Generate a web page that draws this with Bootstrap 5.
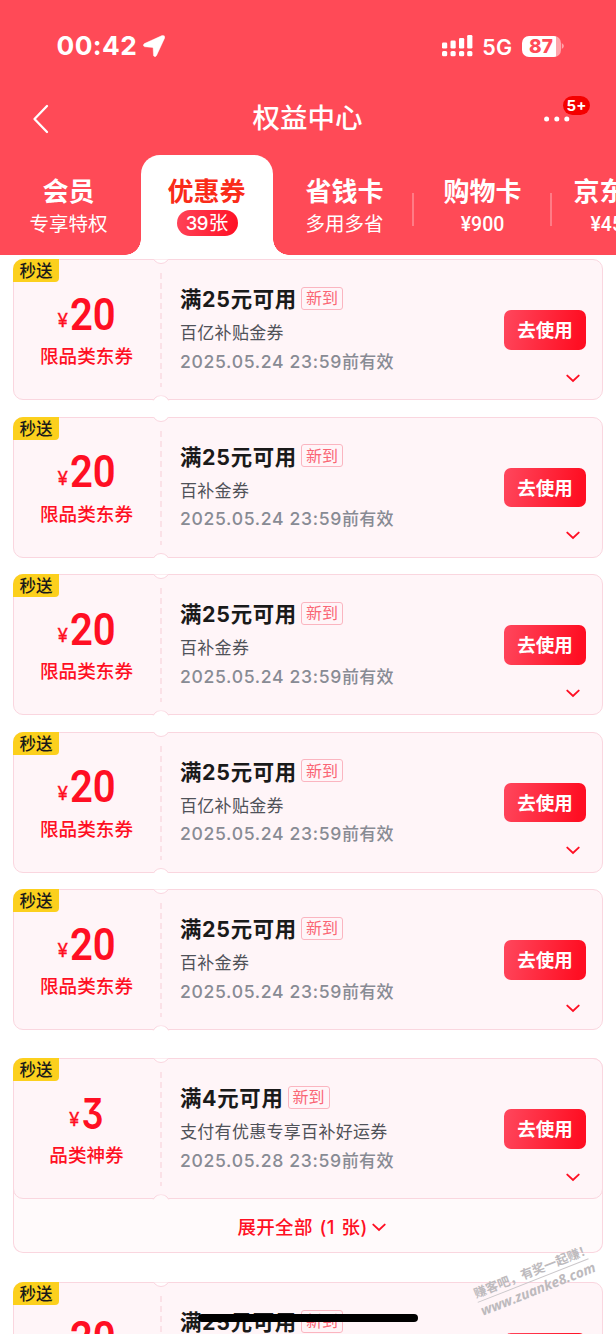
<!DOCTYPE html>
<html lang="zh-CN">
<head>
<meta charset="utf-8">
<meta name="viewport" content="width=device-width, initial-scale=1">
<title>权益中心</title>
<link href="https://cdn.jsdelivr.net/npm/bootstrap@5.3.0/dist/css/bootstrap.min.css" rel="stylesheet">
<style>
  html, body { height: 1334px; overflow: hidden; }
  body { font-family: Inter, "Noto Sans CJK SC", sans-serif; background: #fff; color: #1a1a1a; line-height: 1; }
  .hero { background: #ff4a57; height: 255px; }
  .status { height: 92px; padding: 0 52px 0 56.5px; }
  .clock { font-size: 26.3px; font-weight: 700; letter-spacing: .45px; }
  .net { font-size: 21.5px; font-weight: 600; }
  .batt { width: 39px; height: 21px; border-radius: 7px; background: linear-gradient(90deg, #fff 34px, #ffa4ab 34px); color: #ff4a57; font-size: 19px; font-weight: 800; padding-right: 1px; }
  .titlebar { height: 53px; }
  .titlebar h1 { font-size: 27.5px; font-weight: 500; padding: 0 1px 0 0; }
  .side { width: 80px; }
  .menu-dots { margin-bottom: 3px; }
  .count { top: -20px; left: 19px; width: 27px; height: 19px; border-radius: 10px; background: #f50000; font-size: 15px; font-weight: 700; }
  .tabs { height: 100px; margin-top: 10px; }
  .tab-col { width: 138px; flex: none; color: #fff; padding: 20px 1px 0 0; }
  .tab-col b { font-size: 26px; line-height: 34px; font-weight: 700; white-space: nowrap; }
  .tab-col span { font-size: 19.5px; line-height: 26px; margin-top: 2px; white-space: nowrap; }
  .tab-col .sum { font-family: Roboto, "Noto Sans CJK SC", sans-serif; font-weight: 500; font-size: 19.5px; padding-top: 1px; }
  .ruled::after { content: ""; position: absolute; right: 0; top: 38px; width: 2px; height: 33px; background: #ff7c86; }
  .tab-on { margin: 0 3px; width: 132px; background: #fff; border-radius: 19px 19px 0 0; color: #fa2c19; }
  .tab-on::before, .tab-on::after { content: ""; position: absolute; bottom: 0; width: 16px; height: 16px; }
  .tab-on::before { right: 100%; background: radial-gradient(circle at 0 0, transparent 15.5px, #fff 16px); }
  .tab-on::after { left: 100%; background: radial-gradient(circle at 100% 0, transparent 15.5px, #fff 16px); }
  .tab-on .pill { width: 61px; height: 26px; margin: 1px 0 0 1px; border-radius: 13px; background: linear-gradient(100deg, #ff4459, #ff0f23); color: #fff; font-size: 19.5px; }
  .pill i { font-style: normal; font-weight: 500; font-size: 18.5px; letter-spacing: -.7px; margin-right: 1px; }
  .coupons { padding: 4.4px 13px 0; height: 1079px; }
  .coupon { height: 141px; margin-bottom: 16.5px; border: 1px solid #fad6df; border-radius: 10px; background: #fff5f8; }
  .coupon::before, .coupon::after { content: ""; position: absolute; left: 138px; width: 18px; height: 18px; border-radius: 50%; border: 1px solid #fad6df; background: #fff; }
  .coupon::before { top: -14px; clip-path: inset(13px 0 0 0); }
  .coupon::after { bottom: -14px; clip-path: inset(0 0 13px 0); }
  .gap-after { margin-bottom: 28px; }
  .group-box { border-radius: 10px; background: #fffafb; box-shadow: inset 0 0 0 1px #fad6df; height: 195px; margin-bottom: 29px; }
  .group-box .coupon { margin: 0; }
  .group-box .coupon::after { background: #fffafb; }
  .unfold { height: 56px; color: #ff0f23; font-size: 18.5px; font-weight: 500; padding-left: 7px; }
  .unfold span { letter-spacing: .35px; word-spacing: 1.5px; }
  .flag { left: -1px; top: -1px; width: 46px; height: 23px; padding-top: 1px; border-radius: 10px 0 4px 0; background: #fcd01d; color: #1a1a1a; font-size: 16.5px; font-weight: 500; }
  .stub { width: 147px; flex: none; color: #ff0f23; padding: 35px 2px 0 0; }
  .stub .price { height: 40px; }
  .yen { font-size: 19px; font-weight: 400; -webkit-text-stroke: .3px; margin: 11px 1px 0 0; }
  .amount { font-family: Roboto, sans-serif; font-size: 43.5px; font-weight: 600; transform: scaleX(.92); margin: 0 -2px 0 -1px; }
  .single { font-family: Inter, sans-serif; font-size: 42px; font-feature-settings: "cv09"; transform: scaleX(.82); }
  .kind { font-size: 18.6px; line-height: 28px; font-weight: 500; margin-top: 7px; }
  .tear { width: 2px; margin: 13px 0 12px -1px; flex: none; background: repeating-linear-gradient(#fbe1e7 0 6px, transparent 6px 10px); }
  .info { padding: 24px 0 0 18px; white-space: nowrap; }
  .info h2 { font-size: 21.4px; line-height: 30px; font-weight: 700; letter-spacing: .7px; }
  .newtag { width: 42px; height: 23px; border: 1px solid #fbb5c0; border-radius: 3px; color: #fa6675; font-size: 16px; margin-left: 4px; margin-top: -2px; }
  .info .desc { font-size: 17px; line-height: 28px; letter-spacing: .3px; color: #505259; margin-top: 5px; }
  .info .until { font-size: 17px; line-height: 29px; font-weight: 500; letter-spacing: .3px; color: #888b94; margin-top: -.5px; }
  .until i { font-style: normal; font-size: 17.6px; letter-spacing: .66px; }
  .act { width: 82px; margin: 50px 16px 0 auto; flex: none; }
  .use { width: 82px; height: 39.5px; padding: 0; border: 0; border-radius: 7px; color: #fff; font-size: 18.5px; font-weight: 600; background: linear-gradient(100deg, #ff475d, #ff0f23 90%); line-height: 40px; }
  .act svg { margin: 24px 6.5px 0 auto; }
  .homebar { left: 198px; top: 1313.5px; width: 220px; height: 8px; border-radius: 4px; background: #000; }
  .stamp { left: 474px; top: 1263px; width: 119px; height: 37px; transform: rotate(-21.5deg); color: #bdbabd; font-weight: 700; white-space: nowrap; }
  .stamp div { font-size: 12.5px; line-height: 17px; border-bottom: 1px solid #cbc8cb; }
  .stamp p { font-size: 13.8px; line-height: 18px; font-family: "Open Sans", sans-serif; font-style: italic; font-weight: 700; }
</style>
</head>
<body class="position-relative">
<header class="hero text-white overflow-hidden">
  <div class="status d-flex align-items-center justify-content-between">
    <div class="d-flex align-items-center">
      <span class="clock">00:42</span>
      <svg style="margin-left:6px" width="22" height="22" viewBox="0 0 22 22"><path d="M1.4 8.6 19 .6Q22.2-.2 21.7 2.9L13.6 20.4Q12.2 22.8 10.5 20.7L10.1 13.1Q10 12.4 9.3 12.4L1.7 11.8Q-1.1 10.7 1.4 8.6Z" fill="#fff" stroke="#fff" stroke-width=".4"/></svg>
    </div>
    <div class="d-flex align-items-center">
      <svg width="31" height="22" viewBox="0 0 31 22" fill="#fff"><rect x="0" y="7.5" width="5.2" height="6" rx="1.3"/><rect x="8.5" y="5.5" width="5.2" height="8" rx="1.3"/><rect x="17" y="3" width="5.2" height="10.5" rx="1.3"/><rect x="25.2" y="0" width="5.2" height="13.5" rx="1.3"/><rect x="0" y="16" width="5.2" height="5.3" rx="1.5"/><rect x="8.5" y="16" width="5.2" height="5.3" rx="1.5"/><rect x="17" y="16" width="5.2" height="5.3" rx="1.5"/><rect x="25.2" y="16" width="5.2" height="5.3" rx="1.5"/></svg>
      <span class="net ms-2 pt-1" style="padding-left:1px;margin-right:10px">5G</span>
      <span class="batt d-flex align-items-center justify-content-center">87</span>
      <svg width="3" height="6" viewBox="0 0 3 6"><path d="M.8 0Q5 3 .8 6Z" fill="#ffa4ab"/></svg>
    </div>
  </div>
  <div class="titlebar d-flex align-items-center justify-content-between">
    <div class="side"><svg class="d-block" style="margin-left:32px" width="18" height="30" viewBox="0 0 18 30"><path d="M15 2 2.5 15 15 28" fill="none" stroke="#fff" stroke-width="2.3" stroke-linecap="round" stroke-linejoin="round"/></svg></div>
    <h1 class="m-0">权益中心</h1>
    <div class="side"><div class="menu-dots position-relative d-inline-block ms-2">
      <svg class="d-block" width="26" height="6" viewBox="0 0 26 6" fill="#fff"><circle cx="2.6" cy="3" r="2.5"/><circle cx="12.8" cy="3" r="2.5"/><circle cx="22.8" cy="3" r="2.5"/></svg>
      <span class="count position-absolute d-flex align-items-center justify-content-center">5+</span>
    </div></div>
  </div>
  <nav class="tabs d-flex">
    <div class="tab-col d-flex flex-column align-items-center"><b>会员</b><span>专享特权</span></div>
    <div class="tab-col tab-on position-relative d-flex flex-column align-items-center"><b>优惠券</b><span class="pill d-flex align-items-center justify-content-center"><i>39</i>张</span></div>
    <div class="tab-col ruled position-relative d-flex flex-column align-items-center"><b>省钱卡</b><span>多用多省</span></div>
    <div class="tab-col ruled position-relative d-flex flex-column align-items-center"><b>购物卡</b><span class="sum">¥900</span></div>
    <div class="tab-col d-flex flex-column align-items-center"><b>京东E卡</b><span class="sum">¥45.00</span></div>
  </nav>
</header>
<main class="coupons overflow-hidden" id="list"></main>
<div class="stamp position-absolute"><div>赚客吧，有奖一起赚！</div><p class="m-0">www.zuanke8.com</p></div>
<div class="homebar position-absolute"></div>
<script src="https://cdn.jsdelivr.net/npm/bootstrap@5.3.0/dist/js/bootstrap.bundle.min.js"></script>
<script>
  const chevron = '<svg class="d-block" width="14" height="9" viewBox="0 0 14 9"><path d="M1.3 1.6 7 6.9 12.7 1.6" fill="none" stroke="#ff0f23" stroke-width="1.9" stroke-linecap="round"/></svg>';
  const coupon = (amount, kind, min, desc, day, extra = '') => `
    <article class="coupon position-relative d-flex ${extra}">
      <span class="flag position-absolute d-flex align-items-center justify-content-center">秒送</span>
      <div class="stub text-center">
        <div class="price d-flex align-items-center justify-content-center"><span class="yen">¥</span><span class="amount ${amount < 10 ? 'single' : ''}">${amount}</span></div>
        <div class="kind">${kind}</div>
      </div>
      <div class="tear"></div>
      <div class="info">
        <div class="d-flex align-items-center"><h2 class="m-0">满${min}元可用</h2><span class="newtag d-flex align-items-center justify-content-center">新到</span></div>
        <div class="desc">${desc}</div>
        <div class="until"><i>2025.05.${day} 23:59</i>前有效</div>
      </div>
      <div class="act"><button class="btn use d-block">去使用</button>${chevron}</div>
    </article>`;
  const a = '百亿补贴金券', b = '百补金券';
  document.getElementById('list').innerHTML =
    [a, b, b, a, b].map((d, i) => coupon(20, '限品类东券', 25, d, 24, i === 4 ? 'gap-after' : '')).join('') +
    `<section class="group-box">${coupon(3, '品类神券', 4, '支付有优惠专享百补好运券', 28)}
      <div class="unfold d-flex align-items-center justify-content-center"><span class="me-1">展开全部 (1 张)</span>${chevron}</div></section>` +
    coupon(20, '限品类东券', 25, a, 24);
</script>
</body>
</html>
